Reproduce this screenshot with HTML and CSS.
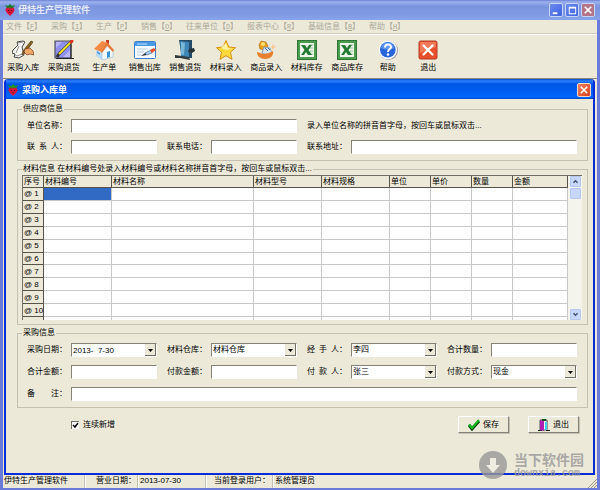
FILE: index.html
```html
<!DOCTYPE html>
<html lang="zh-CN">

<head>
    <meta charset="UTF-8">
    <meta name="viewport" content="width=device-width, initial-scale=1.0">
    <title>伊特生产管理软件</title>
    <link rel="stylesheet" href="styles.css">
</head>

<body>
    <div class="window">
        <header class="titlebar">
            <svg class="logo" viewBox="0 0 10 12">
                <path d="M1 4l2-1h4l2 1 .5 2.500L8 9l-3 3-3-3L.5 6.500z" fill="#d8143c" />
                <path d="M0 1l3 1 2-2 2 2 3-1-2 3-2-.5L5 5 4 3.500 2 4z" fill="#1c7a28" />
                <path d="M3 6h1v1H3zM6 6h1v1H6zM4.500 8h1v1h-1z" fill="#5a0a18" />
            </svg>
            <h1>伊特生产管理软件</h1>
            <div class="caption-buttons">
                <button class="caption" aria-label="最小化"><svg viewBox="0 0 13 13"><path d="M3 9h5v2H3z" fill="#fff" /></svg></button>
                <button class="caption" aria-label="最大化"><svg viewBox="0 0 13 13"><path d="M3 3h8v8H3zM4 5v5h6V5z" fill="#fff" fill-rule="evenodd" /></svg></button>
                <button class="caption caption-dim" aria-label="关闭"><svg viewBox="0 0 13 13"><path d="M3 3l7 7M10 3l-7 7" stroke="#fff" stroke-width="1.800" /></svg></button>
            </div>
        </header>

        <nav class="menu">
            <button disabled>文件【<u>F</u>】</button>
            <button disabled>采购【<u>I</u>】</button>
            <button disabled>生产【<u>P</u>】</button>
            <button disabled>销售【<u>O</u>】</button>
            <button disabled>往来单位【<u>D</u>】</button>
            <button disabled>报表中心【<u>R</u>】</button>
            <button disabled>基础信息【<u>B</u>】</button>
            <button disabled>帮助【<u>H</u>】</button>
        </nav>

        <div class="toolbar">
            <div class="tools">
                <button class="tool">
                    <svg viewBox="0 0 22 20">
                        <path d="M5 2l6-1 2 1-3 5 2 8-5 3-5-1 1-3-3-1 1-3 5-5z" fill="#f6f6f2" stroke="#333" stroke-width=".9" />
                        <path d="M5 3l6-1M2 14l3 2 5-2M7 6l-3 7" fill="none" stroke="#777" stroke-width=".8" />
                        <path d="M19 1l2 1-8 11-3 2 1-4z" fill="#8a6420" stroke="#3a2808" stroke-width=".6" />
                        <path d="M13 9l5-1 3 3 1 4-4-1-3 1-3-3z" fill="#f0a868" stroke="#6b3a18" stroke-width=".7" />
                    </svg>
                    采购入库
                </button>
                <button class="tool">
                    <svg viewBox="0 0 20 20">
                        <path d="M1 1h16v17H1z" fill="#8f8ff0" stroke="#555" stroke-width="1.200" />
                        <path d="M2 2h6L2 8zM16 10v7H9z" fill="#b6b4fa" />
                        <path d="M17 2v17M2 18.500h18" stroke="#222" />
                        <path d="M18 1L5 14l-2 3" fill="none" stroke="#333" stroke-width="3" />
                        <path d="M18 1L5 14" stroke="#ffe920" stroke-width="1.800" />
                        <path d="M19 0l-3 3" stroke="#e83020" stroke-width="2.500" />
                    </svg>
                    采购退货
                </button>
                <button class="tool">
                    <svg viewBox="0 0 20 20">
                        <path d="M2 8l6 4v8l-6-4z" fill="#b9d9f4" />
                        <path d="M8 12l6-7 5 6v6L8 20z" fill="#f2f8fd" stroke="#9cbcd8" stroke-width=".6" />
                        <path d="M0 9L8 1l6 2-6 9z" fill="#f48a42" />
                        <path d="M13 2l7 8-1 2-6-6-5 7-1-1z" fill="#e87838" />
                        <path d="M12 0h3v4l-3-2z" fill="#c83a20" />
                        <path d="M13 12l3-1v6l-3 1z" fill="#3b92d8" />
                        <path d="M3 11l3 2v2l-3-2z" fill="#4f9ee0" />
                    </svg>
                    生产单
                </button>
                <button class="tool">
                    <svg viewBox="0 0 22 20">
                        <rect x=".5" y="1.500" width="21" height="17" rx="1" fill="#f4f9fe" stroke="#3a80c8" />
                        <path d="M1 2h20v4H1z" fill="#4a9ae4" />
                        <path d="M3 4h10" stroke="#b8dcfa" />
                        <path d="M3 9h11M3 12h7M3 15h4" stroke="#b8cce0" />
                        <path d="M7 16l4-3 2 2z" fill="#334" />
                        <path d="M11 13l6-3 1 3-5 2z" fill="#a8d0f4" stroke="#345a88" stroke-width=".6" />
                        <path d="M16 10l4-2 2 2-4 3z" fill="#e8502c" />
                    </svg>
                    销售出库
                </button>
                <button class="tool">
                    <svg viewBox="0 0 20 20">
                        <path d="M4 0h13v18H7z" fill="#244c68" />
                        <path d="M5 1l9 1v16l-8-2z" fill="#3f86b4" />
                        <path d="M6 2l4 1-1 12-3-1z" fill="#78b6d8" />
                        <path d="M14 9l5-1 1 3-3 2-4-1z" fill="#26333a" />
                        <path d="M0 15l7 1 7 1 1 3-5-1-5-1H0z" fill="#343c40" />
                    </svg>
                    销售退货
                </button>
                <button class="tool">
                    <svg viewBox="0 0 20 20">
                        <path d="M10 .5l2.800 6.500 6.700.7-5 4.600 1.500 7L10 15.700 4 19.300l1.500-7-5-4.600L7.200 7z" fill="#ffd83c" stroke="#d89010" stroke-linejoin="round" />
                        <path d="M10 3l1.800 5 4.500.7L10 10 5 8z" fill="#fff2a0" />
                    </svg>
                    材料录入
                </button>
                <button class="tool">
                    <svg viewBox="0 0 20 20">
                        <path d="M3 5l2-4 5 1 2 4-3 4-5-1z" fill="#e8a020" stroke="#a86410" stroke-width=".6" />
                        <circle cx="7" cy="4" r="2" fill="#ffe070" />
                        <path d="M8 7l6 1 2 5-3 3-7-3z" fill="#d8e4f0" stroke="#6888b0" stroke-width=".7" />
                        <path d="M1 12l6 2 6-1 4-2c1 5-3 8-8 8s-8-3-8-7z" fill="#e88030" />
                        <path d="M9 8l3 3M12 8l2 2" stroke="#3c6fb0" />
                        <path d="M17 4l1 2 2 1-2 1-1 2-1-2-1-1 1-1z" fill="#f8c890" />
                    </svg>
                    商品录入
                </button>
                <button class="tool">
                    <svg viewBox="0 0 20 20">
                        <rect x=".5" y=".5" width="19" height="19" fill="#4c9c50" stroke="#2f7436" />
                        <path d="M3 3h14v14H3z" fill="#eef6ea" />
                        <path d="M12 5h4M12 8h4M13 11h3M13 14h3" stroke="#94c090" />
                        <path d="M4 5h4l2 3 2-3h3l-3.500 5 3.500 5h-4l-2-3-2 3H4l3.500-5z" fill="#237a34" />
                    </svg>
                    材料库存
                </button>
                <button class="tool">
                    <svg viewBox="0 0 20 20">
                        <rect x=".5" y=".5" width="19" height="19" fill="#4c9c50" stroke="#2f7436" />
                        <path d="M3 3h14v14H3z" fill="#eef6ea" />
                        <path d="M12 5h4M12 8h4M13 11h3M13 14h3" stroke="#94c090" />
                        <path d="M4 5h4l2 3 2-3h3l-3.500 5 3.500 5h-4l-2-3-2 3H4l3.500-5z" fill="#237a34" />
                    </svg>
                    商品库存
                </button>
                <button class="tool">
                    <svg viewBox="0 0 20 20">
                        <circle cx="10.500" cy="10.500" r="9.500" fill="#9a9ca8" />
                        <circle cx="9.800" cy="9.800" r="9.400" fill="#f4f7fd" />
                        <circle cx="9.800" cy="9.800" r="7.800" fill="#2864d8" />
                        <path d="M3 8a7 7 0 0 1 13.500 0c-4 2-9 2-13.500 0z" fill="#5c94f0" />
                        <path d="M7 7.500c0-4 6-4 6-.5 0 2-3 2.200-3 5" fill="none" stroke="#fff" stroke-width="2" />
                        <circle cx="10" cy="14.500" r="1.300" fill="#fff" />
                    </svg>
                    帮助
                </button>
                <button class="tool">
                    <svg viewBox="0 0 20 20">
                        <rect x="1" y="1" width="18" height="18" rx="1.500" fill="#e8502c" stroke="#b83a20" />
                        <path d="M2 2h16v5L2 13z" fill="#f07a58" />
                        <path d="M5.500 5.500l9 9M14.500 5.500l-9 9" stroke="#fff" stroke-width="2.200" stroke-linecap="round" />
                    </svg>
                    退出
                </button>
            </div>
        </div>

        <main class="dialog">
            <header class="dialog-title">
                <svg class="logo" viewBox="0 0 10 12">
                    <path d="M1 4l2-1h4l2 1 .5 2.500L8 9l-3 3-3-3L.5 6.500z" fill="#d8143c" />
                    <path d="M0 1l3 1 2-2 2 2 3-1-2 3-2-.5L5 5 4 3.500 2 4z" fill="#1c9a28" />
                    <path d="M3 6h1v1H3zM6 6h1v1H6zM4.500 8h1v1h-1z" fill="#5a0a18" />
                </svg>
                <h2>采购入库单</h2>
                <button class="caption caption-close" aria-label="关闭"><svg viewBox="0 0 13 13"><path d="M3 3l7 7M10 3l-7 7" stroke="#fff" stroke-width="1.800" /></svg></button>
            </header>

            <form class="dialog-body">
                <fieldset>
                    <legend>供应商信息</legend>
                    <div class="fields supplier">
                        <div class="field span2">
                            <label for="company">单位名称：</label>
                            <input type="text" id="company">
                        </div>
                        <p class="span2">录入单位名称的拼音首字母，按回车或鼠标双击...</p>
                        <div class="field">
                            <label for="contact">联&ensp;系&ensp;人：</label>
                            <input type="text" id="contact">
                        </div>
                        <div class="field">
                            <label for="phone">联系电话：</label>
                            <input type="text" id="phone">
                        </div>
                        <div class="field span2">
                            <label for="address">联系地址：</label>
                            <input type="text" id="address">
                        </div>
                    </div>
                </fieldset>

                <fieldset>
                    <legend>材料信息 在材料编号处录入材料编号或材料名称拼音首字母，按回车或鼠标双击...</legend>
                    <div class="grid">
                        <div class="grid-view">
                            <table>
                                <colgroup>
                                    <col class="c-no">
                                    <col class="c-code">
                                    <col class="c-name">
                                    <col class="c-code">
                                    <col class="c-code">
                                    <col class="c-unit">
                                    <col class="c-unit">
                                    <col class="c-unit">
                                    <col>
                                </colgroup>
                                <thead>
                                    <tr>
                                        <th>序号</th>
                                        <th>材料编号</th>
                                        <th>材料名称</th>
                                        <th>材料型号</th>
                                        <th>材料规格</th>
                                        <th>单位</th>
                                        <th>单价</th>
                                        <th>数量</th>
                                        <th>金额</th>
                                    </tr>
                                </thead>
                                <tbody>
                                    <tr><th>@ 1</th><td class="selected"></td><td></td><td></td><td></td><td></td><td></td><td></td><td></td></tr>
                                    <tr><th>@ 2</th><td></td><td></td><td></td><td></td><td></td><td></td><td></td><td></td></tr>
                                    <tr><th>@ 3</th><td></td><td></td><td></td><td></td><td></td><td></td><td></td><td></td></tr>
                                    <tr><th>@ 4</th><td></td><td></td><td></td><td></td><td></td><td></td><td></td><td></td></tr>
                                    <tr><th>@ 5</th><td></td><td></td><td></td><td></td><td></td><td></td><td></td><td></td></tr>
                                    <tr><th>@ 6</th><td></td><td></td><td></td><td></td><td></td><td></td><td></td><td></td></tr>
                                    <tr><th>@ 7</th><td></td><td></td><td></td><td></td><td></td><td></td><td></td><td></td></tr>
                                    <tr><th>@ 8</th><td></td><td></td><td></td><td></td><td></td><td></td><td></td><td></td></tr>
                                    <tr><th>@ 9</th><td></td><td></td><td></td><td></td><td></td><td></td><td></td><td></td></tr>
                                    <tr><th>@ 10</th><td></td><td></td><td></td><td></td><td></td><td></td><td></td><td></td></tr>
                                    <tr><th></th><td></td><td></td><td></td><td></td><td></td><td></td><td></td><td></td></tr>
                                </tbody>
                            </table>
                        </div>
                        <div class="scrollbar">
                            <button type="button" aria-label="向上"><svg viewBox="0 0 11 11"><path d="M3 7l2.500-2.500L8 7" fill="none" stroke="#3c5070" stroke-width="1.600" /></svg></button>
                            <div class="thumb"></div>
                            <button type="button" class="down" aria-label="向下"><svg viewBox="0 0 11 11"><path d="M3 4l2.500 2.500L8 4" fill="none" stroke="#3c5070" stroke-width="1.600" /></svg></button>
                        </div>
                    </div>
                </fieldset>

                <fieldset>
                    <legend>采购信息</legend>
                    <div class="fields purchase">
                        <div class="field">
                            <label for="date">采购日期：</label>
                            <input type="text" id="date" class="drop" value="2013-  7-30">
                        </div>
                        <div class="field">
                            <label for="store">材料仓库：</label>
                            <select id="store" class="drop"><option>材料仓库</option></select>
                        </div>
                        <div class="field">
                            <label for="handler">经&ensp;手&ensp;人：</label>
                            <select id="handler" class="drop"><option>李四</option></select>
                        </div>
                        <div class="field">
                            <label for="count">合计数量：</label>
                            <input type="text" id="count">
                        </div>
                        <div class="field">
                            <label for="total">合计金额：</label>
                            <input type="text" id="total">
                        </div>
                        <div class="field">
                            <label for="paid">付款金额：</label>
                            <input type="text" id="paid">
                        </div>
                        <div class="field">
                            <label for="payer">付&ensp;款&ensp;人：</label>
                            <select id="payer" class="drop"><option>张三</option></select>
                        </div>
                        <div class="field">
                            <label for="method">付款方式：</label>
                            <select id="method" class="drop"><option>现金</option></select>
                        </div>
                        <div class="field span4">
                            <label for="note">备&emsp;&emsp;注：</label>
                            <input type="text" id="note">
                        </div>
                    </div>
                </fieldset>

                <div class="actions">
                    <label class="check"><input type="checkbox" checked>连续新增</label>
                    <button type="button" class="push">
                        <svg viewBox="0 0 12 12"><path d="M1 6l3 4 7-8" fill="none" stroke="#064a0a" stroke-width="3" /><path d="M1 5.500l3 3.500 7-8" fill="none" stroke="#18b820" stroke-width="2" /></svg>
                        保存
                    </button>
                    <button type="button" class="push">
                        <svg viewBox="0 0 12 12">
                            <path d="M0 11.500h4M8 11.500h4" stroke="#222" />
                            <path d="M2 1h7v10H2z" fill="#fff" stroke="#223" stroke-width=".8" />
                            <path d="M2 1l4 1v10l-4-1z" fill="#b020b0" />
                            <path d="M7 3h2v8H7z" fill="#40d0e8" />
                            <path d="M4 0h4v2H4z" fill="#184a28" />
                        </svg>
                        退出
                    </button>
                </div>
            </form>
        </main>

        <footer class="status">
            <span class="s-app">伊特生产管理软件</span>
            <span class="s-label">营业日期：</span>
            <span class="s-date">2013-07-30</span>
            <span class="s-user">当前登录用户：</span>
            <span class="s-name">系统管理员</span>
            <svg class="grip" viewBox="0 0 9 9"><path d="M0 9l9-9M3 9l6-6M6 9l3-3" stroke="#a09c88" /></svg>
        </footer>

        <div class="watermark">
            <svg viewBox="0 0 28 28">
                <circle cx="14" cy="14" r="14" fill="#999" />
                <path d="M11 7h6v7h4l-7 8-7-8h4z" fill="#f0eee4" />
            </svg>
            <div>
                <strong>当下软件园</strong>
                <span>downxia.com</span>
            </div>
        </div>
    </div>
</body>

</html>
```
FILE: styles.css
```css
* {
    box-sizing: border-box;
}

body {
    margin: 0;
    background-color: #ece9d8;
    font: 8px/12px "Liberation Sans", "Noto Sans CJK SC", sans-serif;
    color: #000;
}

button,
input,
select {
    font: inherit;
    color: inherit;
    margin: 0;
    padding: 0;
    border: 0;
    border-radius: 0;
    background: none;
}

h1,
h2 {
    margin: 0;
    font-size: 9px;
    line-height: 12px;
    color: #fff;
}

p {
    margin: 0;
}

svg {
    display: block;
}

.window {
    position: relative;
    display: flex;
    flex-direction: column;
    min-height: 100vh;
    border: 3px solid #6a7ad8;
    border-width: 0 3px 2px;
}

/* title bars */
.titlebar {
    display: flex;
    align-items: center;
    gap: 3px;
    height: 20px;
    margin: 0 -3px;
    padding: 0 5px;
    background: linear-gradient(#6c82d4, #9db2ee 2px, #7b94de 6px, #7f9ae2 14px, #87a4ea);
}

.titlebar h1 {
    color: #e4eafa;
}

.logo {
    width: 10px;
    height: 12px;
}

.caption-buttons {
    display: flex;
    gap: 2px;
    margin-left: auto;
}

.caption {
    width: 14px;
    height: 14px;
    border: 1px solid #c8d4f6;
    border-radius: 2px;
    background: linear-gradient(135deg, #6c8cf0, #3f62dc);
}

.caption-dim {
    background: #b47488;
}

.caption-close {
    margin-left: auto;
    border-color: #f4d8d0;
    background: linear-gradient(135deg, #f08060, #d8401c);
}

.menu {
    display: flex;
    gap: 9px;
    height: 14px;
    padding: 1px 3px 0;
    border-bottom: 1px solid #cfccba;
    box-shadow: 0 1px #fff;
}

.menu button {
    color: #aca899;
    white-space: nowrap;
}

.menu u {
    display: inline-block;
    width: 4px;
    font: 7px/8px "Liberation Mono", monospace;
}

/* toolbar */
.toolbar {
    height: 45px;
    padding-top: 6px;
    border-bottom: 1px solid #8c8a7c;
}

.tools {
    display: grid;
    grid-template-columns: repeat(11, 1fr);
    width: 75%;
}

.tool {
    display: flex;
    flex-direction: column;
    align-items: center;
    gap: 2px;
    white-space: nowrap;
}

.tool svg {
    height: 20px;
}

/* purchase dialog */
.dialog {
    flex: 1;
    display: flex;
    flex-direction: column;
    margin: 0 2px 0 1px;
    border: 2px solid #0a2bd8;
    border-top: 0;
    border-radius: 4px 4px 0 0;
    overflow: hidden;
}

.dialog-title {
    display: flex;
    align-items: center;
    gap: 4px;
    height: 20px;
    margin: 0 -2px;
    padding: 2px 4px 0;
    background: linear-gradient(#0a46c8, #2a80ff 2px, #0055e5 5px, #005cf0 12px, #0068ff 18px, #0048d0);
}

.dialog-body {
    flex: 1;
    display: flex;
    flex-direction: column;
    gap: 2px;
    padding: 4px 5px 0 11px;
}

fieldset {
    min-width: 0;
    margin: 0;
    padding: 4px 10px 6px 9px;
    border: 1px solid #c4c1b2;
}

legend {
    margin-left: -5px;
    padding: 0 1px;
    line-height: 12px;
    white-space: nowrap;
}

.fields {
    display: grid;
    grid-template-columns: repeat(4, minmax(0, 1fr));
    grid-auto-rows: 14px;
    column-gap: 10px;
    align-items: center;
}

.supplier {
    row-gap: 7px;
}

.purchase {
    row-gap: 8px;
}

.span2 {
    grid-column: span 2;
}

.span4 {
    grid-column: span 4;
}

.field {
    display: flex;
    align-items: center;
}

.field label {
    flex: 0 0 44px;
    white-space: nowrap;
}

.field input,
.field select {
    flex: 1;
    min-width: 0;
    height: 14px;
    padding: 0 1px;
    border: 1px solid #fff;
    border-top-color: #858377;
    border-left-color: #858377;
    background-color: #fff;
    appearance: none;
}

.field .drop {
    background: #fff url("data:image/svg+xml,%3Csvg xmlns='http://www.w3.org/2000/svg' width='11' height='12'%3E%3Cpath d='M0 0h11v12H0z' fill='%23716f64'/%3E%3Cpath d='M0 0h10v11H0z' fill='%23ece9d8'/%3E%3Cpath d='M3 5h5L5.500 8z'/%3E%3C/svg%3E") no-repeat right center;
}

/* material table */
.grid {
    display: flex;
    height: 145px;
    margin: -4px -5px -2px -5px;
    border-top: 1px solid #716f64;
    background-color: #fff;
}

.grid-view {
    flex: 1;
    overflow: hidden;
    border-left: 1px solid #716f64;
}

table {
    table-layout: fixed;
    width: 100%;
    height: 154px;
    border-collapse: separate;
    border-spacing: 0;
}

th,
td {
    height: 12px;
    padding: 0 1px;
    border-right: 1px solid #c8c8c8;
    border-bottom: 1px solid #c8c8c8;
    line-height: 11px;
}

th {
    border-color: #55534a;
    background-color: #ece9d8;
    font-weight: normal;
    text-align: left;
    white-space: nowrap;
}

.selected {
    background-color: #316ac5;
}

.c-no {
    width: 21px;
}

.c-code {
    width: 68px;
}

.c-name {
    width: 142px;
}

.c-unit {
    width: 41px;
}

.scrollbar {
    display: flex;
    flex-direction: column;
    gap: 1px;
    width: 14px;
    padding: 0 1px 0 2px;
    background-color: #f4f3ec;
}

.scrollbar button,
.thumb {
    height: 11px;
    border: 1px solid #b4c8f4;
    border-radius: 1px;
    background-color: #c6d6fc;
}

.scrollbar .down {
    margin-top: auto;
}

/* bottom row */
.actions {
    display: flex;
    align-items: center;
    gap: 19px;
    padding: 6px 9px 0 54px;
}

.check {
    display: flex;
    align-items: center;
    gap: 4px;
    margin-right: auto;
}

.check input {
    width: 8px;
    height: 8px;
    border-top: 1px solid #716f64;
    border-left: 1px solid #716f64;
    background-color: #fff;
    appearance: none;
}

.check input:checked {
    background-image: url("data:image/svg+xml,%3Csvg xmlns='http://www.w3.org/2000/svg' viewBox='0 0 7 7'%3E%3Cpath d='M1 3l2 2 3-4' fill='none' stroke='%23000' stroke-width='1.500'/%3E%3C/svg%3E");
}

.push {
    display: flex;
    align-items: center;
    justify-content: center;
    gap: 3px;
    width: 51px;
    height: 17px;
    border: 1px solid #fff;
    border-right-color: #858377;
    border-bottom-color: #858377;
    box-shadow: 1px 1px #c4c1b2;
}

.push svg {
    width: 12px;
    height: 12px;
}

/* status bar */
.status {
    display: flex;
    height: 13px;
    white-space: nowrap;
}

.status span {
    padding-left: 2px;
    border-right: 1px solid #c4c1b2;
    box-shadow: 1px 0 #fff;
}

.status .s-app {
    width: 82px;
    padding-left: 1px;
}

.status .s-label {
    width: 53px;
    padding-left: 11px;
}

.s-date {
    width: 68px;
}

.status .s-user {
    width: 67px;
    padding-left: 8px;
}

.status .s-name {
    flex: 1;
    border: 0;
    box-shadow: none;
}

.grip {
    align-self: flex-end;
    width: 9px;
    height: 9px;
}

/* site mark over the lower right corner */
.watermark {
    position: absolute;
    right: 13px;
    bottom: 9px;
    display: flex;
    gap: 7px;
    color: #999;
    opacity: .8;
}

.watermark svg {
    width: 28px;
    height: 28px;
}

.watermark strong,
.watermark span {
    display: block;
}

.watermark strong {
    font-size: 14px;
    line-height: 18px;
}

.watermark span {
    font: bold 10px/10px "Liberation Mono", monospace;
}
```
